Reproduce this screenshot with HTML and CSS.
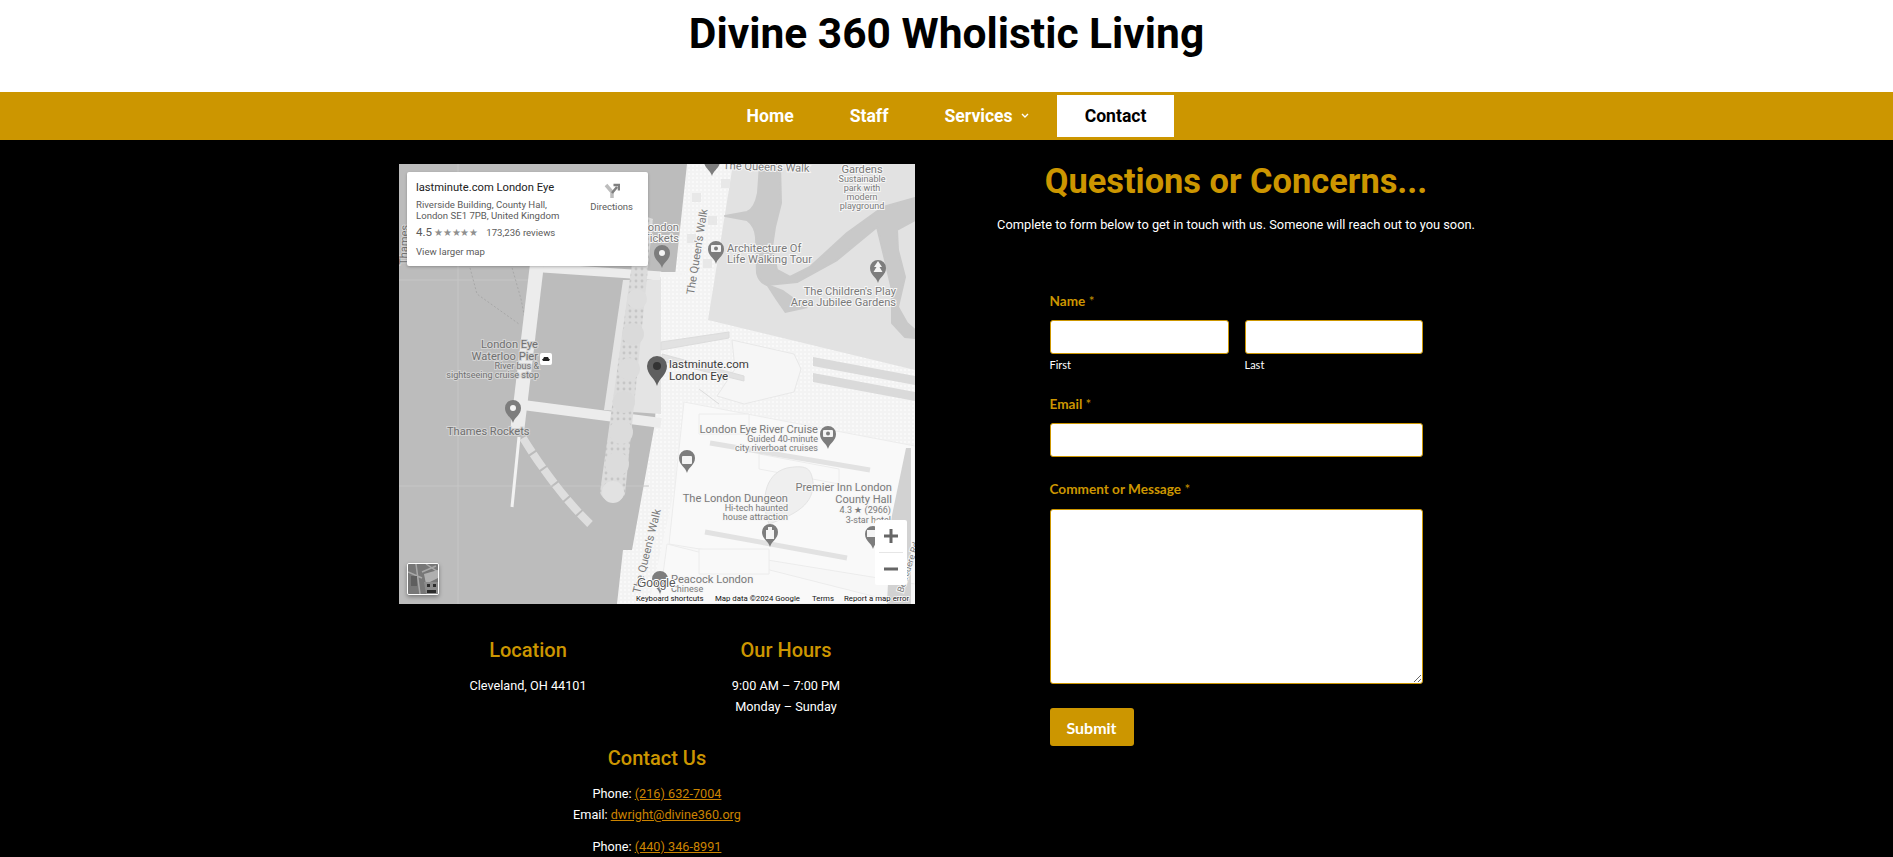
FILE: index.html
```html
<!DOCTYPE html>
<html lang="en">
<head>
    <meta charset="UTF-8">
    <meta name="viewport" content="width=device-width, initial-scale=1.0">
    <title>Contact - Divine 360 Wholistic Living</title>
    <link rel="stylesheet" href="styles.css">
</head>
<body>
    <header class="site-header">
        <h1>Divine 360 Wholistic Living</h1>
    </header>

    <nav class="main-nav">
        <a href="#">Home</a>
        <a href="#">Staff</a>
        <a href="#">Services
            <svg class="chevron" viewBox="0 0 8 5" width="8" height="5"><path d="M1 1l3 3 3-3" fill="none" stroke="#fff" stroke-width="1.4"/></svg>
        </a>
        <a href="#" class="current">Contact</a>
    </nav>

    <main class="content">
        <section class="col">
            <div class="map">
                <svg class="map-art" viewBox="0 0 516 440" width="516" height="440">
                    <defs>
                        <pattern id="dots" width="4" height="4" patternUnits="userSpaceOnUse">
                            <rect width="4" height="4" fill="#f3f3f3"/>
                            <circle cx="2" cy="2" r="1" fill="#fcfcfc"/>
                        </pattern>
                        <pattern id="beads" width="6" height="6" patternUnits="userSpaceOnUse">
                            <rect width="6" height="6" fill="#dcdcdc"/>
                            <circle cx="3" cy="3" r="1.4" fill="#c6c6c6"/>
                        </pattern>
                        <path id="pin" d="M0 0C-1.5-6-8-8-8-15A8 8 0 1 1 8-15C8-8 1.5-6 0 0Z"/>
                    </defs>

                    <!-- land -->
                    <rect width="516" height="440" fill="#f7f7f7"/>
                    <path d="M262 110L516 205V290L300 240L262 240Z" fill="url(#dots)"/>
                    <path d="M288 0H336L309 156L290 260L250 440H218L224 386H233L256 259L276 112Z" fill="url(#dots)"/>

                    <!-- park -->
                    <path d="M334 0H516V206L309 156Z" fill="#e2e2e2"/>
                    <path d="M361 0L359 29Q356 45 348 48L326 52L348 56Q356 62 357 73L358 109Q360 118 368 121L398 118L438 96L478 63L486 96L493 126L493 159L506 173L516 174V166L508 159L499 143L506 113L499 86L498 66L516 56V34L484 43L448 69L411 103L391 113L378 106L373 83L376 63L382 39L381 0Z" fill="#c9c9c9" stroke="#c9c9c9" stroke-width="2" stroke-linejoin="round"/>
                    <path d="M366 119L384 126L409 144L386 149Q376 135 366 119Z" fill="#c9c9c9"/>
                    <path d="M414 193L516 212V221L414 202ZM414 209L516 228V237L414 218Z" fill="#dadada"/>
                    <path d="M333 176L395 190L402 205L395 228L345 240L318 232L336 205Z" fill="#f6f6f6" stroke="#e8e8e8"/>

                    <!-- water -->
                    <path d="M0 0H288L276 112L262 112L256 259L233 386H224L218 440H0Z" fill="#bcbcbc"/>
                    <path d="M59 0V440M0 322H250M0 116H130" stroke="#c6c6c6" fill="none"/>
                    <path d="M70 100L78 130L120 160M112 100L122 135L127 160" stroke="#a8a8a8" stroke-dasharray="2 2" fill="none"/>

                    <!-- piers and embankment -->
                    <path d="M138 100L118 268" stroke="#ececec" stroke-width="14"/>
                    <path d="M144 104L262 112" stroke="#ececec" stroke-width="9"/>
                    <path d="M124 241L262 259" stroke="#ececec" stroke-width="10"/>
                    <path d="M120 273L113 343" stroke="#f2f2f2" stroke-width="3"/>
                    <path d="M124 274C140 300 165 335 191 360" stroke="#dedede" stroke-width="8" stroke-dasharray="17 2" fill="none"/>
                    <path d="M224 116H262V250L205 246Z" fill="#e4e4e4"/>
                    <path d="M240 50L254 55L226 330C222 340 204 340 201 328Z" fill="url(#beads)"/>
                    <circle cx="214" cy="328" r="11" fill="#e2e2e2"/>
                    <circle cx="218" cy="300" r="12" fill="#dcdcdc"/>
                    <circle cx="222" cy="268" r="12" fill="#dcdcdc"/>
                    <circle cx="225" cy="238" r="11" fill="#dadada"/>
                    <circle cx="230" cy="205" r="11" fill="#dcdcdc"/>
                    <circle cx="234" cy="170" r="11" fill="#dadada"/>
                    <circle cx="238" cy="135" r="10" fill="#dedede"/>
                    <rect x="261" y="108" width="25" height="5" fill="#f4f4f4"/>
                    <path d="M262 178L330 168V174L262 186ZM263 190L345 212V217L263 197ZM300 225L320 240" stroke="#dcdcdc" fill="#e2e2e2"/>
                    <g fill="#e8e8e8">
                        <rect x="322" y="15" width="9" height="9"/>
                        <rect x="293" y="29" width="9" height="9"/>
                        <rect x="309" y="52" width="9" height="9"/>
                        <rect x="288" y="70" width="9" height="9"/>
                        <rect x="304" y="95" width="9" height="9"/>
                    </g>

                    <!-- county hall buildings -->
                    <g fill="#f9f9f9" stroke="#ececec">
                        <path d="M285 238L516 282V420L270 380Z"/>
                        <path d="M268 380L505 440H260Z"/>
                        <path d="M300 250H350V270H300ZM360 290L440 305V320L360 305ZM300 385H370V410H300Z"/>
                    </g>
                    <path d="M311 279L471 306M306 368L448 394" stroke="#e2e2e2" stroke-width="5"/>
                    <path d="M388 304C410 300 412 306 414 318C415 340 398 350 370 360C362 340 364 310 388 304Z" fill="#efefef" stroke="#e4e4e4"/>
                    <path d="M507 284L492 356L488 440H512V284Z" fill="#d2d2d2"/>

                    <!-- pins -->
                    <g fill="#7d7d7d">
                        <use href="#pin" x="114" y="259"/>
                        <use href="#pin" x="263" y="104"/>
                        <use href="#pin" x="313" y="12"/>
                        <use href="#pin" x="317" y="100"/>
                        <use href="#pin" x="479" y="119"/>
                        <use href="#pin" x="429" y="285"/>
                        <use href="#pin" x="288" y="309"/>
                        <use href="#pin" x="371" y="383"/>
                        <use href="#pin" x="474" y="385"/>
                        <use href="#pin" x="261" y="430"/>
                    </g>
                    <g fill="#f4f4f4">
                        <circle cx="114" cy="244" r="3"/>
                        <circle cx="263" cy="89" r="3"/>
                        <rect x="312" y="81" width="10" height="7" rx="1"/>
                        <path d="M479 97l4 6h-2.500l3 5h-9l3-5H475Z"/>
                        <rect x="424" y="266" width="10" height="7" rx="1"/>
                        <rect x="283" y="292" width="10" height="8" rx="1"/>
                        <path d="M367 366h8v9h-8ZM369 363h4v3h-4Z"/>
                        <rect x="468" y="366" width="12" height="7"/>
                    </g>
                    <circle cx="317" cy="84.500" r="2" fill="#7d7d7d"/>
                    <circle cx="429" cy="269.500" r="2" fill="#7d7d7d"/>
                    <g transform="translate(258 222)">
                        <path d="M0 0C-2-8-10-11-10-20A10 10 0 1 1 10-20C10-11 2-8 0 0Z" fill="#5f5f5f"/>
                        <circle cy="-20" r="4" fill="#333"/>
                    </g>
                    <rect x="141" y="189" width="12" height="12" rx="2" fill="#fff"/>
                    <path d="M143 195h8l-1 2h-6ZM145 193h4l1 2h-6Z" fill="#222"/>

                    <!-- labels -->
                    <text class="lbl lbl-water" transform="translate(8 101) rotate(-88)">Thames</text>
                    <text class="lbl lbl-water end" x="139" y="184">London Eye</text>
                    <text class="lbl lbl-water end" x="139" y="196">Waterloo Pier</text>
                    <text class="lbl lbl-water sm end" x="140" y="205">River bus &amp;</text>
                    <text class="lbl lbl-water sm end" x="140" y="214">sightseeing cruise stop</text>
                    <text class="lbl lbl-water" x="48" y="271">Thames Rockets</text>
                    <text class="lbl end" x="280" y="67">London</text>
                    <text class="lbl end" x="280" y="78">Tickets</text>
                    <text class="lbl" transform="translate(295 131) rotate(-81)">The Queen's Walk</text>
                    <text class="lbl" transform="translate(324 5) rotate(2)">The Queen's Walk</text>
                    <text class="lbl mid" x="463" y="9">Gardens</text>
                    <text class="lbl sm mid" x="463" y="18">Sustainable</text>
                    <text class="lbl sm mid" x="463" y="27">park with</text>
                    <text class="lbl sm mid" x="463" y="36">modern</text>
                    <text class="lbl sm mid" x="463" y="45">playground</text>
                    <text class="lbl" x="328" y="88">Architecture Of</text>
                    <text class="lbl" x="328" y="99">Life Walking Tour</text>
                    <text class="lbl end" x="497" y="131">The Children's Play</text>
                    <text class="lbl end" x="497" y="142">Area Jubilee Gardens</text>
                    <text class="lbl lbl-dark" x="270" y="204">lastminute.com</text>
                    <text class="lbl lbl-dark" x="270" y="216">London Eye</text>
                    <text class="lbl end" x="419" y="269">London Eye River Cruise</text>
                    <text class="lbl sm end" x="419" y="278">Guided 40-minute</text>
                    <text class="lbl sm end" x="419" y="287">city riverboat cruises</text>
                    <text class="lbl end" x="389" y="338">The London Dungeon</text>
                    <text class="lbl sm end" x="389" y="347">Hi-tech haunted</text>
                    <text class="lbl sm end" x="389" y="356">house attraction</text>
                    <text class="lbl end" x="493" y="327">Premier Inn London</text>
                    <text class="lbl end" x="493" y="339">County Hall</text>
                    <text class="lbl sm end" x="492" y="349">4.3 ★ (2966)</text>
                    <text class="lbl sm end" x="492" y="359">3-star hotel</text>
                    <text class="lbl" x="272" y="419">Peacock London</text>
                    <text class="lbl sm" x="272" y="428">Chinese</text>
                    <text class="lbl" transform="translate(241 430) rotate(-76)">The Queen's Walk</text>
                    <text class="lbl sm" transform="translate(504 429) rotate(-72)">Belvedere Rd</text>
                    <text class="google" x="238" y="423">Google</text>

                    <!-- attribution -->
                    <text class="attr" x="237" y="437">Keyboard shortcuts</text>
                    <text class="attr" x="316" y="437">Map data ©2024 Google</text>
                    <text class="attr" x="413" y="437">Terms</text>
                    <text class="attr" x="445" y="437">Report a map error</text>
                </svg>

                <div class="place-card">
                    <div class="place-info">
                        <div class="place-name">lastminute.com London Eye</div>
                        <div class="place-addr">Riverside Building, County Hall,<br>London SE1 7PB, United Kingdom</div>
                        <div class="place-rating"><span class="score">4.5</span> <span class="stars">★★★★★</span> <span class="reviews">173,236 reviews</span></div>
                        <div class="place-link">View larger map</div>
                    </div>
                    <div class="place-dir">
                        <svg viewBox="0 0 16 16" width="16" height="16">
                            <path d="M2 2L8 9V15" fill="none" stroke="#bdbdbd" stroke-width="3.500"/>
                            <path d="M8 10L13 4M9.500 2H15V7.500" fill="none" stroke="#7f7f7f" stroke-width="2.500"/>
                        </svg>
                        <div>Directions</div>
                    </div>
                </div>

                <div class="map-thumb">
                    <svg viewBox="0 0 30 30" width="30" height="30">
                        <rect width="30" height="30" fill="#777"/>
                        <path d="M0 8L14 14M8 0L12 30M18 0L30 8M14 8L28 2" stroke="#a8a8a8" stroke-width="1.500"/>
                        <path d="M16 10L30 6V14L18 20Z" fill="#b0b0b0"/>
                        <path d="M16 18H30V30H18Z" fill="#8c8c8c"/>
                        <path d="M19 20h3v3h-3ZM25 20h3v3h-3ZM19 26h9v3h-9Z" fill="#2c2c2c"/>
                        <path d="M3 12h6v10H3Z" fill="#5e5e5e"/>
                    </svg>
                </div>

                <div class="zoom-ctl">
                    <svg viewBox="0 0 32 65" width="32" height="65">
                        <path d="M9 16h14M16 9v14M9 49h14" stroke="#666" stroke-width="3"/>
                        <path d="M4 32.500h24" stroke="#e6e6e6"/>
                    </svg>
                </div>
            </div>

            <div class="info-row">
                <div class="info-block">
                    <h3>Location</h3>
                    <p>Cleveland, OH 44101</p>
                </div>
                <div class="info-block">
                    <h3>Our Hours</h3>
                    <p>9:00 AM – 7:00 PM<br>Monday – Sunday</p>
                </div>
            </div>
            <div class="info-block">
                <h3>Contact Us</h3>
                <p>Phone: <a href="#">(216) 632-7004</a><br>Email: <a href="#">dwright@divine360.org</a></p>
                <p>Phone: <a href="#">(440) 346-8991</a></p>
            </div>
        </section>

        <section class="col">
            <h2>Questions or Concerns...</h2>
            <p class="intro">Complete to form below to get in touch with us. Someone will reach out to you soon.</p>

            <form class="contact-form">
                <div class="field">
                    <label>Name <span class="req">*</span></label>
                    <div class="name-row">
                        <div class="name-part">
                            <input type="text">
                            <small>First</small>
                        </div>
                        <div class="name-part">
                            <input type="text">
                            <small>Last</small>
                        </div>
                    </div>
                </div>
                <div class="field">
                    <label>Email <span class="req">*</span></label>
                    <input type="email">
                </div>
                <div class="field">
                    <label>Comment or Message <span class="req">*</span></label>
                    <textarea></textarea>
                </div>
                <button type="submit">Submit</button>
            </form>
        </section>
    </main>
</body>
</html>
```

FILE: styles.css
```css
html, body {
    height: 100%;
}
body {
    margin: 0;
    height: 100vh;
    overflow: hidden;
    background-color: #000;
    color: #fff;
    font-family: Roboto, "Liberation Sans", sans-serif;
}
.site-header {
    background: #fff;
    height: 92px;
    text-align: center;
}
.site-header h1 {
    margin: 0;
    padding-top: 10px;
    color: #000;
    font-size: 42.500px;
    font-weight: 700;
    line-height: 48px;
}
.main-nav {
    display: flex;
    justify-content: center;
    align-items: center;
    height: 48px;
    background-color: #cc9600;
}
.main-nav a {
    display: flex;
    align-items: center;
    gap: 8px;
    box-sizing: border-box;
    height: 42px;
    padding: 0 28px 1px;
    color: #fff;
    font-size: 17.600px;
    font-weight: 700;
    text-decoration: none;
}
.main-nav a.current {
    background: #fff;
    color: #000;
}
.content {
    display: grid;
    grid-template-columns: 516px 516px;
    justify-content: center;
    column-gap: 63px;
    padding-top: 24px;
}

/* map */
.map {
    position: relative;
    width: 516px;
    height: 440px;
    overflow: hidden;
}
.map-art {
    display: block;
}
.lbl {
    font-family: Roboto, sans-serif;
    font-size: 11.100px;
    fill: #7a7a7a;
    stroke: #f6f6f6;
    stroke-width: 2px;
    paint-order: stroke;
}
.lbl.sm {
    font-size: 9px;
}
.lbl.end {
    text-anchor: end;
}
.lbl.mid {
    text-anchor: middle;
}
.lbl-water {
    fill: #707070;
    stroke: #d4d4d4;
}
.lbl-dark {
    fill: #3c3c3c;
    font-size: 11.500px;
}
.google {
    font-family: "Liberation Sans", sans-serif;
    font-size: 12px;
    fill: #555;
    stroke: #fff;
    stroke-width: 2px;
    paint-order: stroke;
}
.attr {
    font-family: Roboto, sans-serif;
    font-size: 7.800px;
    fill: #111;
    stroke: #fafafa;
    stroke-width: 1.500px;
    paint-order: stroke;
}
.place-card {
    position: absolute;
    top: 8px;
    left: 8px;
    display: flex;
    justify-content: space-between;
    box-sizing: border-box;
    width: 241px;
    height: 94px;
    padding: 9px 10px 9px 9px;
    background: #fff;
    border-radius: 2px;
    box-shadow: 0 1px 3px rgba(0,0,0,0.25);
    color: #5b5b5b;
    font-size: 9.600px;
    line-height: 10.500px;
}
.place-name {
    color: #222;
    font-size: 11.200px;
    line-height: 14px;
    margin-bottom: 5px;
}
.place-rating {
    margin-top: 4px;
    line-height: 14px;
}
.score {
    font-size: 11.500px;
}
.stars {
    color: #8f8f8f;
    font-size: 10px;
    letter-spacing: -0.300px;
}
.reviews {
    margin-left: 6px;
}
.place-link {
    margin-top: 7px;
}
.place-dir {
    margin-top: 2px;
    margin-right: 5px;
    text-align: center;
    font-size: 9.500px;
}
.place-dir svg {
    display: block;
    margin: 0 auto 3px;
}
.map-thumb {
    position: absolute;
    left: 8px;
    top: 399px;
    width: 30px;
    height: 30px;
    border: 1px solid #fff;
    border-radius: 2px;
    overflow: hidden;
    box-shadow: 0 2px 4px rgba(0,0,0,0.35);
}
.map-thumb svg {
    display: block;
}
.zoom-ctl {
    position: absolute;
    left: 476px;
    top: 356px;
    width: 32px;
    height: 65px;
    background: #fff;
    border-radius: 2px;
}
.zoom-ctl svg {
    display: block;
}

/* info under the map */
.info-row {
    display: grid;
    grid-template-columns: 1fr 1fr;
    margin-top: 33px;
    margin-bottom: 17px;
}
.info-block {
    text-align: center;
}
.info-block h3 {
    margin: 0 0 12px;
    color: #cc9600;
    font-size: 20px;
    font-weight: 500;
    line-height: 26px;
}
.info-block p {
    margin: 0 0 11px;
    font-size: 12.700px;
    font-weight: 400;
    line-height: 21px;
}
.info-block a {
    color: #cc8400;
}

/* form column */
h2 {
    margin: -1px 0 0;
    color: #cc9600;
    font-size: 34.400px;
    font-weight: 700;
    line-height: 36px;
    text-align: center;
}
.intro {
    margin: 15px 0 0;
    font-size: 12.800px;
    line-height: 21px;
    text-align: center;
}
.contact-form {
    width: 373px;
    margin: 56px auto 0;
    font-family: Lato, "Open Sans", sans-serif;
}
.field {
    margin-bottom: 22px;
}
label {
    display: block;
    margin-bottom: 9px;
    color: #cc9600;
    font-size: 13.600px;
    font-weight: 700;
    line-height: 20px;
}
.req {
    font-weight: 400;
}
.name-row {
    display: grid;
    grid-template-columns: 179px 178px;
    column-gap: 16px;
}
small {
    display: block;
    margin-top: 3px;
    font-size: 11px;
    line-height: 15px;
}
input, textarea {
    display: block;
    box-sizing: border-box;
    width: 100%;
    border: 1px solid #cc9600;
    border-radius: 3px;
    background: #fff;
    padding: 4px;
    margin: 0;
}
input {
    height: 34px;
}
textarea {
    height: 175px;
    margin-top: 10px;
}
button {
    display: block;
    width: 84px;
    height: 38px;
    margin-top: 24px;
    border: none;
    border-radius: 3px;
    background-color: #cc9600;
    color: #fff;
    font-family: Lato, "Open Sans", sans-serif;
    font-size: 16px;
    font-weight: 700;
    padding: 0;
}
```
